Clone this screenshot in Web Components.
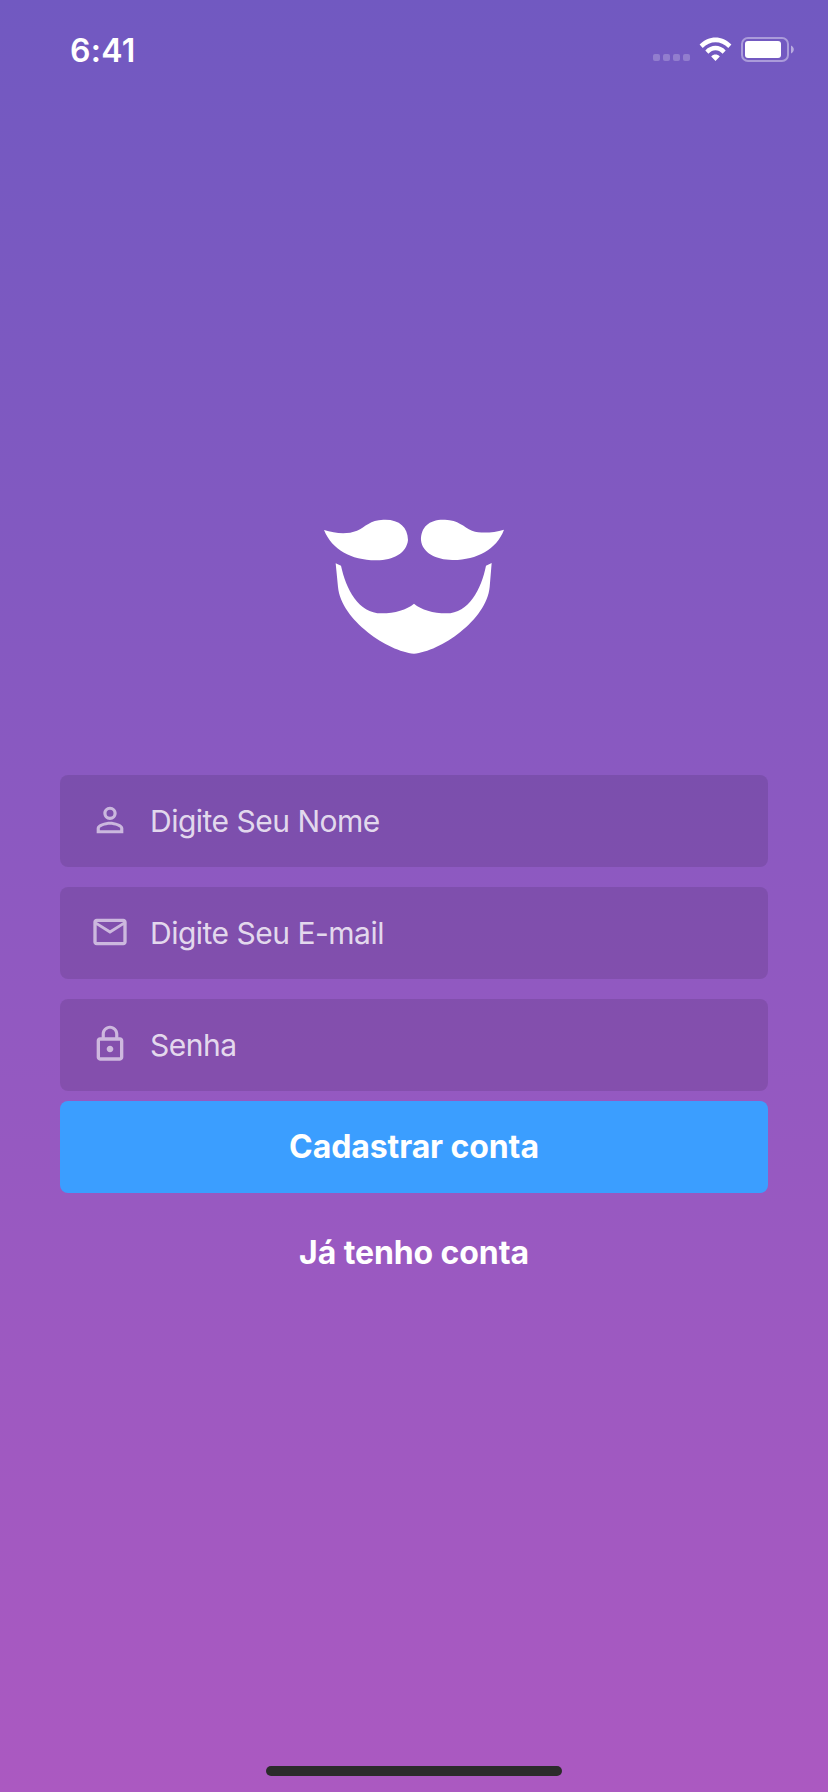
<!DOCTYPE html>
<html lang="pt-BR">
<head>
<meta charset="utf-8">
<title>Cadastro</title>
<style>
html, body { margin: 0; height: 100%; }
body { font-family: Inter, "Liberation Sans", sans-serif; color: #fff; }
</style>
</head>
<body>
<signup-screen></signup-screen>
<script>
const define = (name, html) => {
  const template = document.createElement('template');
  template.innerHTML = html;
  customElements.define(name, class extends HTMLElement {
    constructor() {
      super();
      this.attachShadow({ mode: 'open' }).append(template.content.cloneNode(true));
    }
  });
};

define('status-bar', `
<style>
:host { display: flex; justify-content: space-between; align-items: flex-start; height: 88px; box-sizing: border-box; padding: 32px 34px 0 70px; }
time { font-size: 32px; font-weight: 600; line-height: 38px; letter-spacing: .3px; }
svg { display: block; width: 142px; height: 26px; margin-top: 4px; }
</style>
<time>6:41</time>
<svg viewBox="0 0 142 26" fill="#fff">
  <g opacity=".22"><rect x="1" y="18" width="7" height="7" rx="2"/><rect x="11" y="18" width="7" height="7" rx="2"/><rect x="21" y="18" width="7" height="7" rx="2"/><rect x="31" y="18" width="7" height="7" rx="2"/></g>
  <path d="M47.6 8.6C56.7-1 70.3-1 79.4 8.6L76.3 11.9C69 4.2 58 4.2 50.7 11.9ZM53.3 14.5C59.2 8.3 67.8 8.3 73.7 14.5L70.6 17.7C66.2 13.1 60.8 13.1 56.4 17.7ZM59.2 20.5C61.7 17.9 65.3 17.9 67.8 20.5L63.5 25Z"/>
  <rect x="90" y="2" width="46" height="23" rx="6" fill="none" stroke="#fff" stroke-width="2" opacity=".4"/>
  <rect x="93" y="5" width="36" height="17" rx="3"/>
  <path d="M139 9.5C142.7 11 142.7 16 139 17.5Z" opacity=".5"/>
</svg>`);

define('beard-logo', `
<style>
:host { display: block; width: 210px; height: 150px; }
svg { display: block; width: 100%; height: 100%; }
</style>
<svg viewBox="0 0 630 450" fill="#fff">
  <path d="M42 60C75 70 111 74 141 62C167 50 180 30 220 29C267 27 293 50 294 90C290 130 248 152 197 151C123 150 67 120 42 60Z"/>
  <path d="M582 59C549 68 515 72 486 62C460 50 445 30 405 29C359 27 332 50 333 91C337 129 380 151 430 150C501 149 559 119 582 59Z"/>
  <path d="M77 160L93 167C108 236 145 310 215 310C255 310 290 299 312 281C334 299 369 310 409 310C477 310 514 236 528 167L545 159L539 231C530 330 390 425 312 431C235 425 93 330 84 231Z"/>
</svg>`);

define('form-field', `
<style>
:host { display: flex; align-items: flex-start; height: 92px; box-sizing: border-box; padding: 25px 30px 0; border-radius: 8px; background: rgba(0,0,0,.1); }
::slotted(svg) { display: block; width: 40px; height: 40px; fill: rgba(255,255,255,.6); flex: none; }
span { margin: 3px 0 0 20px; font-size: 30px; line-height: 36px; color: rgba(255,255,255,.8); letter-spacing: -.5px; white-space: nowrap; }
</style>
<slot name="icon"></slot><span><slot></slot></span>`);

define('primary-button', `
<style>
:host { display: flex; align-items: center; justify-content: center; height: 92px; box-sizing: border-box; padding-bottom: 2px; border-radius: 8px; background: #3b9eff; font-size: 32px; font-weight: 700; letter-spacing: -.1px; }
</style>
<span><slot></slot></span>`);

define('text-link', `
<style>
:host { display: block; text-align: center; font-size: 32px; font-weight: 700; line-height: 38px; letter-spacing: -.1px; }
</style>
<slot></slot>`);

define('signup-screen', `
<style>
:host { display: flex; flex-direction: column; height: 100vh; min-height: 1792px; box-sizing: border-box; background: linear-gradient(#7159c1, #ab59c1); }
beard-logo { margin: 422px 0 0 310px; }
form { display: flex; flex-direction: column; gap: 20px; margin: 115px 60px 0; }
primary-button { margin-top: -10px; }
text-link { margin-top: 41px; }
.home { width: 296px; height: 10px; border-radius: 5px; background: #2b2b2b; margin: auto auto 16px; }
</style>
<status-bar></status-bar>
<beard-logo></beard-logo>
<form>
  <form-field><svg slot="icon" viewBox="0 0 24 24"><path d="M12 5.9a2.1 2.1 0 1 1 0 4.2 2.1 2.1 0 0 1 0-4.2m0 9c2.97 0 6.1 1.46 6.1 2.1v1.1H5.9V17c0-.64 3.13-2.1 6.1-2.1M12 4C9.79 4 8 5.79 8 8s1.79 4 4 4 4-1.79 4-4-1.79-4-4-4zm0 9c-2.67 0-8 1.34-8 4v3h16v-3c0-2.66-5.33-4-8-4z"/></svg>Digite Seu Nome</form-field>
  <form-field><svg slot="icon" viewBox="0 0 24 24"><path d="M20 4H4c-1.1 0-1.99.9-1.99 2L2 18c0 1.1.9 2 2 2h16c1.1 0 2-.9 2-2V6c0-1.1-.9-2-2-2zm0 14H4V8l8 5 8-5v10zm-8-7L4 6h16l-8 5z"/></svg>Digite Seu E-mail</form-field>
  <form-field><svg slot="icon" viewBox="0 0 24 24"><path d="M12 17c1.1 0 2-.9 2-2s-.9-2-2-2-2 .9-2 2 .9 2 2 2zm6-9h-1V6c0-2.76-2.24-5-5-5S7 3.24 7 6v2H6c-1.1 0-2 .9-2 2v10c0 1.1.9 2 2 2h12c1.1 0 2-.9 2-2V10c0-1.1-.9-2-2-2zM8.9 6c0-1.71 1.39-3.1 3.1-3.1s3.1 1.39 3.1 3.1v2H8.9V6zM18 20H6V10h12v10z"/></svg>Senha</form-field>
  <primary-button>Cadastrar conta</primary-button>
</form>
<text-link>Já tenho conta</text-link>
<div class="home"></div>`);
</script>
</body>
</html>
